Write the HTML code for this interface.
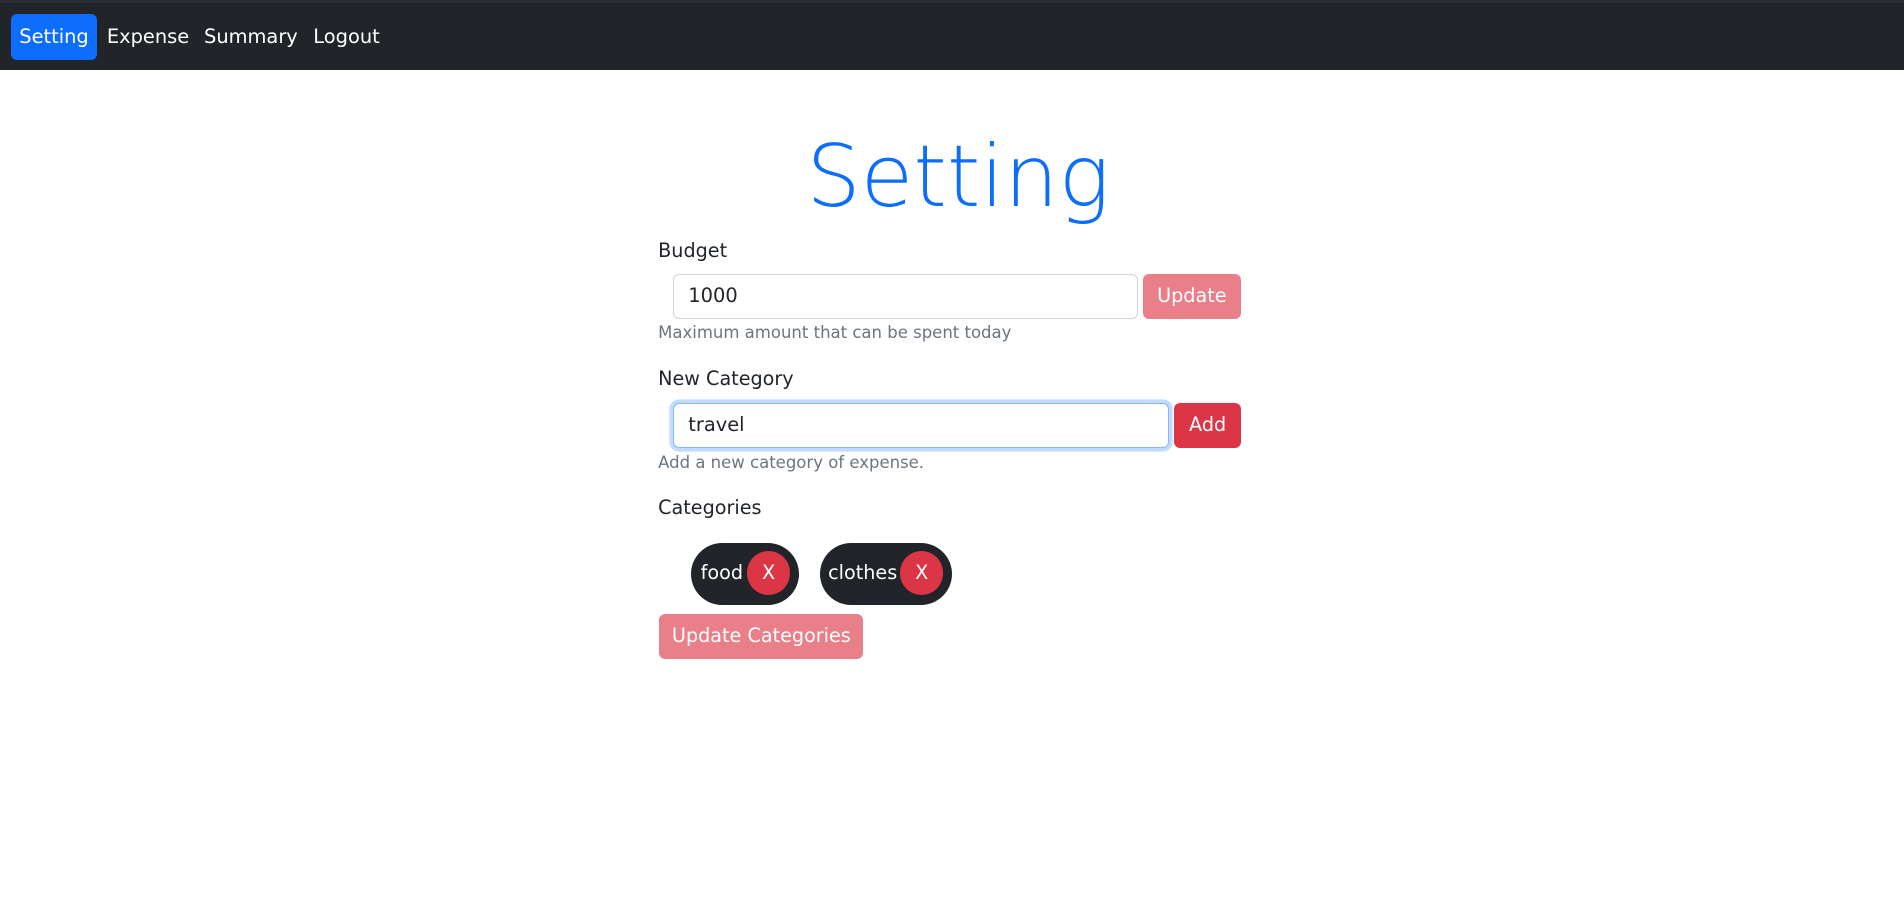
<!DOCTYPE html>
<html><head><meta charset="utf-8"><style>
html,body{margin:0;padding:0;background:#fff;}
body{width:1568px;height:750px;zoom:1.2143;font-family:"DejaVu Sans","Liberation Sans",sans-serif;font-size:16px;color:#212529;position:relative;overflow:hidden}
.nav{position:absolute;left:0;top:0;width:1568px;height:58px;background:#212529;border-top:3px solid #2b2e31;box-sizing:border-box}
.nav a{position:absolute;top:9px;height:38px;line-height:38px;color:#fff;}
.nav .act{background:#0d6efd;border-radius:5px;left:9px;width:71px;text-align:center}
h1{position:absolute;left:0;width:1578px;text-align:center;top:103px;margin:0;font-size:70.5px;font-weight:200;color:#0d6efd;line-height:88px}
.a{position:absolute}
.lbl{left:542px;line-height:24px;font-size:15.8px}
.inp{border:1px solid #ced4da;border-radius:5px;box-sizing:border-box;height:37px;line-height:35px;padding-left:12px;background:#fff}
.btn{color:#fff;border-radius:5px;text-align:center;height:37px;line-height:37px;font-size:15.8px}
.help{left:542px;font-size:13.6px;color:#6c757d;line-height:20px}
.chip{background:#212529;color:#fff;border-radius:26px;height:51px;top:447px;font-size:15.8px}
.chip span{position:absolute;left:8px;top:0;line-height:49px}
.x{position:absolute;top:7px;width:36px;height:36px;border-radius:50%;background:#dc3545;text-align:center;line-height:36px;color:#fff}
</style></head><body>
<div class="nav">
<a class="act">Setting</a><a style="left:88px">Expense</a><a style="left:168px">Summary</a><a style="left:258px">Logout</a>
</div>
<h1>Setting</h1>
<div class="a lbl" style="top:194px">Budget</div>
<div class="a inp" style="left:554px;top:226px;width:383px">1000</div>
<div class="a btn" style="left:941px;top:226px;width:81px;background:#e97f89">Update</div>
<div class="a help" style="top:264px">Maximum amount that can be spent today</div>
<div class="a lbl" style="top:300px">New Category</div>
<div class="a inp" style="left:554px;top:332px;width:409px;border-color:#86b7fe;box-shadow:0 0 0 3px rgba(13,110,253,.25)">travel</div>
<div class="a btn" style="left:967px;top:332px;width:55px;background:#dc3545">Add</div>
<div class="a help" style="top:371px">Add a new category of expense.</div>
<div class="a lbl" style="top:406px">Categories</div>
<div class="a chip" style="left:569px;width:89px"><span>food</span><div class="x" style="left:46px">X</div></div>
<div class="a chip" style="left:675px;width:109px"><span style="left:7px">clothes</span><div class="x" style="left:66px">X</div></div>
<div class="a btn" style="left:543px;top:506px;width:168px;background:#e97f89">Update Categories</div>
</body></html>
